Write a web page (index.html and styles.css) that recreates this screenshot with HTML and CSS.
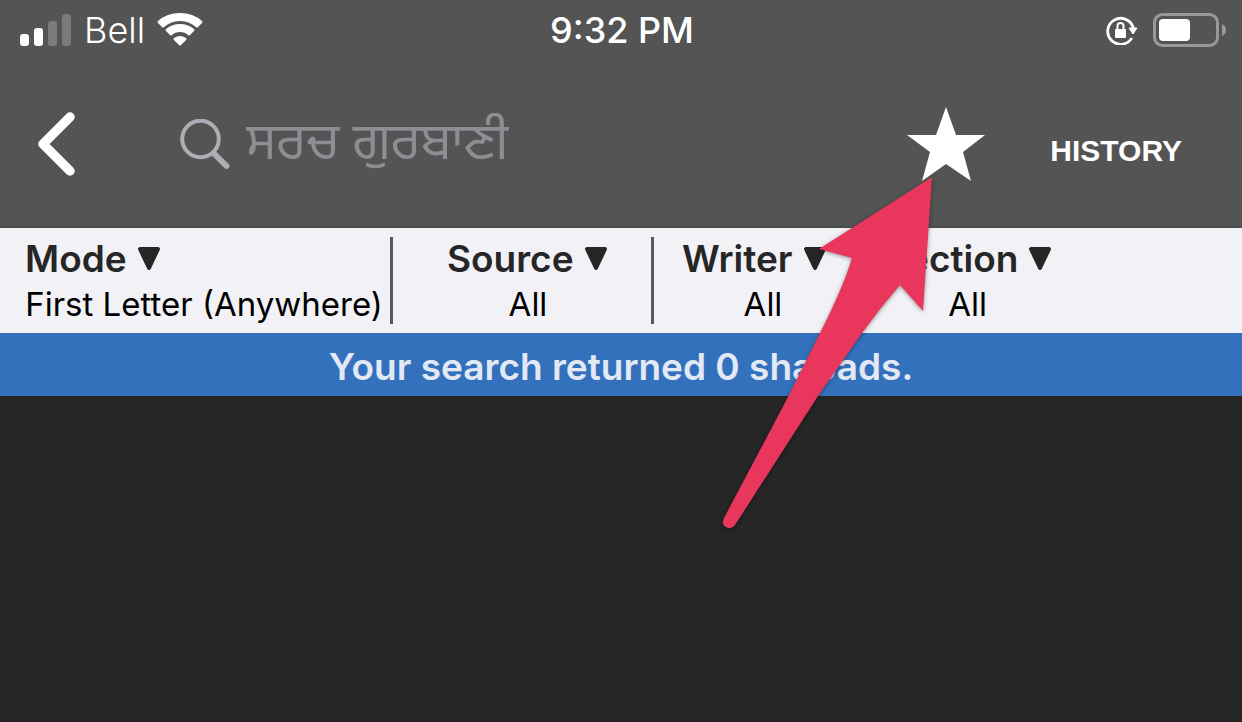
FILE: index.html
```
<!DOCTYPE html>
<html lang="en">

	<head>
		<meta charset="UTF-8">
		<meta name="viewport" content="width=device-width, initial-scale=1">
		<title>Search</title>
		<link rel="stylesheet" href="styles.css">
	</head>

	<body>
		<div class="status">
			<div class="status-left">
				<svg width="54" height="32" viewBox="0 0 54 32">
					<rect x="2" y="20" width="9" height="12" rx="3" fill="#fff"/>
					<rect x="16" y="14" width="9" height="18" rx="3" fill="#fff"/>
					<rect x="30" y="7" width="9" height="25" rx="3" fill="#7b7b7b"/>
					<rect x="44" y="0" width="9" height="32" rx="3" fill="#7b7b7b"/>
				</svg>
				<span class="carrier">Bell</span>
				<svg width="46" height="34" viewBox="0 0 46 34" fill="#fff">
					<path d="M1 10Q0 9 1 8Q10 0 23 0Q36 0 45 8Q46 9 45 10L41 14Q40 15 39 14Q32 8 23 8Q14 8 7 14Q6 15 5 14Z"/>
					<path d="M9 18Q8 17 9 16Q15 11 23 11Q31 11 37 16Q38 17 37 18L33 22Q32 23 31 22Q28 19 23 19Q18 19 15 22Q14 23 13 22Z"/>
					<path d="M17 27Q16 26 17 25Q20 23 23 23Q26 23 29 25Q30 26 29 27L24 32Q23 33 22 32Z"/>
				</svg>
			</div>
			<span class="time">9:32 PM</span>
			<div class="status-right">
				<svg width="32" height="30" viewBox="0 0 32 30">
					<path d="M25.2 24A13 13 0 1 1 27 12" fill="none" stroke="#fff" stroke-width="2.8" stroke-linecap="round"/>
					<path d="M23 13h8l-4 6z" fill="#fff" stroke="#fff" stroke-linejoin="round"/>
					<rect x="9" y="14" width="11" height="9" rx="1" fill="#fff"/>
					<path d="M11.5 14v-3a3 3 0 0 1 6 0V14" fill="none" stroke="#fff" stroke-width="2"/>
				</svg>
				<svg width="74" height="34" viewBox="0 0 74 34">
					<rect x="2.5" y="1.5" width="63" height="31" rx="8" fill="none" stroke="#999" stroke-width="3"/>
					<rect x="7" y="6" width="31" height="22" rx="4" fill="#fff"/>
					<path d="M70 11Q74 13 74 17Q74 21 70 23Z" fill="#999"/>
				</svg>
			</div>
		</div>

		<header class="toolbar">
			<button class="icon-btn" type="button" aria-label="Back">
				<svg width="38" height="64" viewBox="0 0 38 64">
					<path d="M32 5L5 32L32 59" fill="none" stroke="#fff" stroke-width="9.5" stroke-linecap="round" stroke-linejoin="round"/>
				</svg>
			</button>
			<div class="search">
				<label for="query" aria-label="Search">
					<svg width="50" height="50" viewBox="0 0 50 50" fill="none" stroke="#aeadb5">
						<circle cx="20.5" cy="20" r="18.3" stroke-width="4"/>
						<path d="M34 34.5L46.5 47" stroke-width="6" stroke-linecap="round"/>
					</svg>
				</label>
				<input id="query" type="text" placeholder="ਸਰਚ ਗੁਰਬਾਣੀ">
			</div>
			<button class="icon-btn" type="button" aria-label="Favourites">
				<svg width="80" height="76" viewBox="0 0 80 76">
					<path d="M40 1L50 29H79L57 46L65 75L40 58L16 75L24 46L1 29H30Z" fill="#fff"/>
				</svg>
			</button>
			<button class="history" type="button">HISTORY</button>
		</header>

		<div class="filters">
			<div class="filter mode">
				<label for="mode">Mode <svg class="caret" width="24" height="24" viewBox="0 0 24 24"><path d="M3 2H21L12 21Z"/></svg></label>
				<select id="mode"><option>First Letter (Anywhere)</option></select>
			</div>
			<div class="filter source">
				<label for="source">Source <svg class="caret" width="24" height="24" viewBox="0 0 24 24"><path d="M3 2H21L12 21Z"/></svg></label>
				<select id="source"><option>All</option></select>
			</div>
			<div class="filter writer">
				<label for="writer">Writer <svg class="caret" width="24" height="24" viewBox="0 0 24 24"><path d="M3 2H21L12 21Z"/></svg></label>
				<select id="writer"><option>All</option></select>
			</div>
			<div class="filter section">
				<label for="section">Section <svg class="caret" width="24" height="24" viewBox="0 0 24 24"><path d="M3 2H21L12 21Z"/></svg></label>
				<select id="section"><option>All</option></select>
			</div>
		</div>

		<p class="result">Your search returned 0 shabads.</p>

		<!-- arrow pointing at the star -->
		<svg class="pointer" width="220" height="360" viewBox="0 0 220 360">
			<path d="M216 5L103 77L136 86Q127 116 104 161L72 225L8 346Q5 353 10 355Q15 358 19 353L102 224L146 161Q164 136 184 113L207 139Z" fill="#e8365d"/>
		</svg>
	</body>

</html>
```
FILE: styles.css
```
* {
	box-sizing: border-box;
}
body {
	position: relative;
	margin: 0;
	min-height: 100vh;
	background: #262626;
	font-family: Inter, "Liberation Sans", sans-serif;
}
svg {
	display: block;
	flex: none;
}
button {
	padding: 0;
	border: 0;
	background: none;
	color: #fff;
	cursor: pointer;
}

/* status bar */
.status {
	display: grid;
	grid-template-columns: 1fr auto 1fr;
	align-items: center;
	height: 60px;
	padding: 0 16px 0 18px;
	background: #545454;
	color: #fff;
	font-size: 36px;
}
.status-left, .status-right {
	display: flex;
	align-items: center;
	gap: 12px;
}
.status-right {
	justify-content: flex-end;
	gap: 14px;
}
.carrier {
	font-weight: 300;
}
.time {
	font-weight: 500;
}

/* toolbar */
.toolbar {
	display: flex;
	align-items: center;
	height: 168px;
	padding: 2px 60px 0 38px;
	background: #545454;
	border-bottom: 2px solid #4e4e4e;
}
.search {
	display: flex;
	flex: 1;
	align-items: center;
	gap: 16px;
	margin-left: 104px;
}
.search input {
	flex: 1;
	min-width: 0;
	height: 90px;
	padding: 4px 0 0;
	border: 0;
	outline: none;
	background: none;
	color: #fff;
	font-family: "Noto Sans Gurmukhi", "Noto Sans", sans-serif;
	font-size: 51px;
	line-height: 86px;
}
.search input::placeholder {
	color: #8e8d93;
	opacity: 1;
}
.history {
	margin-left: 64px;
	padding-top: 14px;
	font-family: "Liberation Sans", Arial, sans-serif;
	font-size: 30px;
	font-weight: bold;
}

/* filters */
.filters {
	display: flex;
	padding: 9px 0;
	background: #f2f1f6;
}
.filter {
	display: flex;
	flex-direction: column;
	height: 87px;
	border-right: 3px solid #58575c;
}
.filter:last-child {
	border-right: 0;
}
.filter label {
	display: flex;
	align-items: center;
	gap: 10px;
	color: #262626;
	font-size: 37px;
	font-weight: 600;
	line-height: 44px;
}
.filter select {
	appearance: none;
	width: 100%;
	min-width: 162px;
	padding: 0;
	border: 0;
	background: none;
	color: #000;
	font-family: inherit;
	font-size: 33px;
	line-height: 46px;
	text-align: center;
	text-align-last: center;
}
.caret {
	fill: #262626;
	stroke: #262626;
	stroke-width: 4;
	stroke-linejoin: round;
}
.mode {
	padding: 0 7px 0 25px;
}
.source {
	padding: 0 42px 0 54px;
}
.writer {
	padding: 0 18px 0 28px;
}
.section {
	padding: 0 18px;
}

.result {
	margin: 0;
	padding: 12px 10px 8px;
	background: #3371bc;
	color: #e2e8f4;
	font-size: 37px;
	font-weight: 600;
	line-height: 43px;
	text-align: center;
}

.pointer {
	position: absolute;
	top: 172px;
	left: 716px;
	filter: drop-shadow(0 1px 2px rgba(0, 0, 0, .4));
	pointer-events: none;
}
```
